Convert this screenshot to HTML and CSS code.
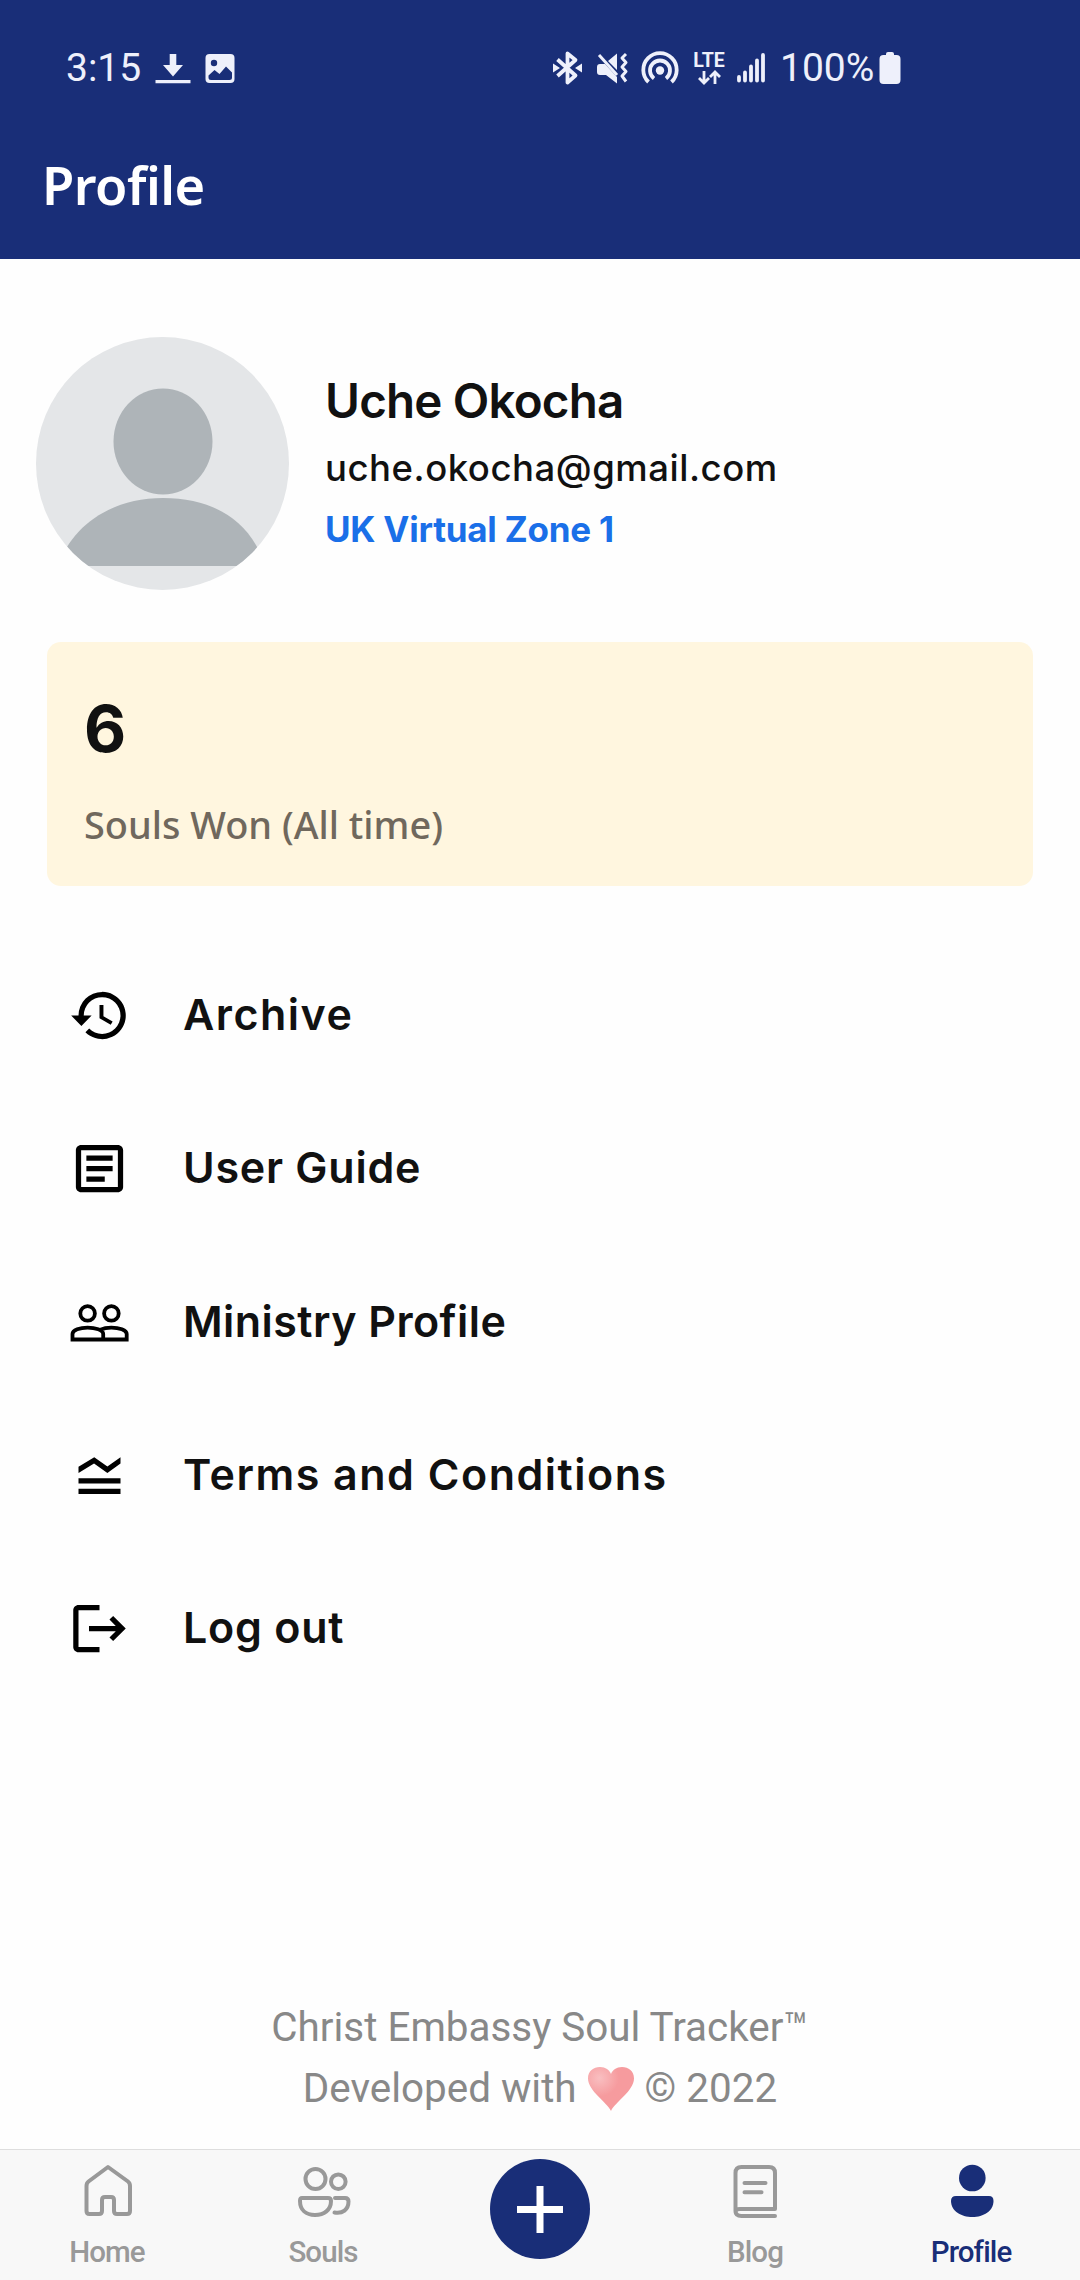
FILE: index.html
```html
<!DOCTYPE html>
<html lang="en">
    <head>
        <meta charset="utf-8">
        <title>Profile</title>
        <meta name="viewport" content="width=device-width">

        <link rel="stylesheet" href="styles.css">
    </head>

    <body>
        <header>
            <div class="status-bar">
                <span class="clock">3:15</span>
                <svg class="download" width="36" height="36" viewBox="0 0 36 36">
                    <path d="M14.700 4h6.600v11h6.700l-10 11.500L8 15h6.700zM.5 30h35v3.300H.5z"/>
                </svg>
                <svg class="picture" width="30" height="36" viewBox="0 0 30 36">
                    <rect x=".5" y="4" width="29" height="29" rx="4"/>
                    <circle class="hole" cx="9" cy="13" r="3.200"/>
                    <path class="hole" d="M3.500 25.500l6-5.500 5 4 6.500-7.500 6 6v5q0 2.500-2.500 2.500H6q-2.500 0-2.500-2.500z"/>
                </svg>

                <svg class="bluetooth" width="30" height="36" viewBox="0 0 30 36">
                    <path class="line" d="M4.500 9.500l18 16-8 7V3.500l8 6.500-18 16"/>
                    <path d="M0 13.500l7 4.500-7 4.500zM29 13.500L22 18l7 4.500z"/>
                </svg>
                <svg class="mute" width="32" height="36" viewBox="0 0 32 36">
                    <path d="M0 14h8l12 13v6.500L9 25H3q-3 0-3-3v-5q0-3 3-3zM11 11L20 3.500V20z"/>
                    <path class="line thin" d="M2 5l18 20"/>
                    <path class="line thin" d="M29 4l-4 4 4 4.500-4 4.500 4 4.500-4 4.500 4 5.500"/>
                </svg>
                <svg class="hotspot" width="38" height="36" viewBox="0 0 38 36">
                    <circle cx="19" cy="20.500" r="4.200"/>
                    <path class="line" d="M13 28.500a10 10 0 1 1 12 0M7.500 32a16.700 16.700 0 1 1 23 0"/>
                </svg>
                <div class="lte">
                    <span>LTE</span>
                    <svg width="28" height="15" viewBox="0 0 28 15">
                        <path d="M9 1v12M4 8l5 5 5-5M20 14V2M15 7l5-5 5 5"/>
                    </svg>
                </div>
                <svg class="signal" width="28" height="36" viewBox="0 0 28 36">
                    <path class="bars" d="M2 27v3.500M8 22.500v8M14 16.500v14M20 10.500v20M26 5v25.500"/>
                </svg>
                <span class="percent">100%</span>
                <svg class="battery" width="22" height="36" viewBox="0 0 22 36">
                    <path d="M7 4q0-2 2-2h4q2 0 2 2v1h2.500q4 0 4 4v21q0 4-4 4h-13q-4 0-4-4V9q0-4 4-4H7z"/>
                </svg>
            </div>

            <h1>Profile</h1>
        </header>

        <main>
            <section class="user">
                <svg class="avatar" width="253" height="253" viewBox="0 0 253 253">
                    <clipPath id="round"><circle cx="126.500" cy="126.500" r="126.500"/></clipPath>
                    <g clip-path="url(#round)">
                        <path class="backdrop" d="M0 0h253v253H0z"/>
                        <ellipse cx="127" cy="104.500" rx="49.500" ry="53"/>
                        <path d="M22 229C36 188 76 161 127 161s88 23 102 68z"/>
                    </g>
                </svg>
                <div class="info">
                    <h2>Uche Okocha</h2>
                    <div class="email">uche.okocha@gmail.com</div>
                    <div class="zone">UK Virtual Zone 1</div>
                </div>
            </section>

            <section class="souls-won">
                <div class="count">6</div>
                <div class="label">Souls Won (All time)</div>
            </section>

            <ul class="menu">
                <li>
                    <svg width="63" height="63" viewBox="0 0 24 24">
                        <path d="M13 3a9 9 0 0 0-9 9H1.200l3.900 4L9 12H6a7 7 0 1 1 7 7c-1.930 0-3.680-.79-4.940-2.060l-1.420 1.420A9 9 0 1 0 13 3zm-1 5v5l4.280 2.540.72-1.210-3.500-2.080V8z"/>
                    </svg>
                    <span class="archive">Archive</span>
                </li>
                <li>
                    <svg width="63" height="63" viewBox="0 0 24 24">
                        <path d="M19 5v14H5V5h14m0-2H5c-1.100 0-2 .9-2 2v14c0 1.100.9 2 2 2h14c1.100 0 2-.9 2-2V5c0-1.100-.9-2-2-2zM14 17H7v-2h7v2zm3-4H7v-2h10v2zm0-4H7V7h10v2z"/>
                    </svg>
                    <span class="guide">User Guide</span>
                </li>
                <li>
                    <svg class="outline" width="63" height="63" viewBox="0 0 63 63">
                        <circle cx="19.600" cy="22.400" r="7.300"/>
                        <circle cx="43.400" cy="22.400" r="7.300"/>
                        <path d="M4.500 48.500V43c0-4 7.500-6.400 15.100-6.400S35.200 39 35.200 43v5.500zM35.200 48.500h23.500V43c0-4-7.700-6.400-15.300-6.400-4 0-8 .7-11 2.200"/>
                    </svg>
                    <span class="ministry">Ministry Profile</span>
                </li>
                <li>
                    <svg width="63" height="63" viewBox="0 0 24 24">
                        <path d="M20 15H4v-2h16v2zm0 2H4v2h16v-2zm-5-6l5-3.550V5l-5 3.550L10 5 4 8.660V11l5.920-3.610L15 11z"/>
                    </svg>
                    <span class="terms">Terms and Conditions</span>
                </li>
                <li>
                    <svg width="63" height="63" viewBox="0 0 24 24">
                        <path d="M12 3H4c-1.100 0-2 .9-2 2v14c0 1.100.9 2 2 2h8v-2H4V5h8zM22 12l-4.800-4.800-1.400 1.400L18.200 11H8v2h10.200l-2.400 2.400 1.400 1.400z"/>
                    </svg>
                    <span class="logout">Log out</span>
                </li>
            </ul>
        </main>

        <footer>
            <div class="product">Christ Embassy Soul Tracker™</div>
            <div class="credit">
                Developed with
                <svg width="46" height="45" viewBox="0 0 46 45">
                    <defs>
                        <radialGradient id="shine" cx=".25" cy=".25" r=".42">
                            <stop offset="0" stop-color="#f9bfc1"/>
                            <stop offset="1" stop-color="#f69b9e"/>
                        </radialGradient>
                    </defs>
                    <path fill="url(#shine)" d="M23 45C19 36 0 25 0 12.500 0 5 5.500 1 12 1c5.500 0 9.500 3 11 7 1.500-4 5.500-7 11-7 6.500 0 12 4 12 11.500C46 25 27 36 23 45z"/>
                </svg>
                © 2022
            </div>
        </footer>

        <nav>
            <a>
                <svg width="60" height="60" viewBox="0 0 60 60">
                    <path d="M30 6L50 20.500Q52 22 52 25v25q0 3-3 3H39q-3 0-3-3V39q0-3-3-3h-6q-3 0-3 3v11q0 3-3 3H11.500q-3 0-3-3V25q0-3 2-4.500z"/>
                </svg>
                <span>Home</span>
            </a>
            <a>
                <svg width="60" height="60" viewBox="0 0 60 60">
                    <circle cx="21.500" cy="18" r="10"/>
                    <circle cx="44.300" cy="20.700" r="7.300"/>
                    <path d="M8 37h26q3 0 3 3c0 9-7 14-16 14S6 49 6 40q0-3 2-3zM41 37H51q3.500 0 3.500 3.500c0 8-6 12.500-14 11"/>
                </svg>
                <span>Souls</span>
            </a>
            <a class="add">
                <svg width="100" height="100" viewBox="0 0 100 100">
                    <circle cx="50" cy="50" r="50"/>
                    <path d="M50 27v47M27 50.500h46"/>
                </svg>
            </a>
            <a>
                <svg width="60" height="60" viewBox="0.500 0 60 60">
                    <path d="M49.500 55H16Q10 55 10 50V12q0-6 6-6h27.500q6 0 6 6v36H14.500Q10 48 10 51M19 22h21M19 31.300h17"/>
                </svg>
                <span>Blog</span>
            </a>
            <a class="active">
                <svg width="60" height="60" viewBox="0 0 60 60">
                    <circle cx="30.300" cy="17" r="13.300"/>
                    <path d="M14 35h33q4.500 0 4.500 5c0 10-10 16-21.200 16S9 50 9 40q0-5 5-5z"/>
                </svg>
                <span>Profile</span>
            </a>
        </nav>
    </body>
</html>
```
FILE: styles.css
```css
body {
    display: flex;
    flex-direction: column;
    height: 2280px;
    margin: 0;
    background-color: #fefefe;
    color: #111;
    font-family: Inter, "Liberation Sans", sans-serif;
}

h1, h2 {
    margin: 0;
}

svg {
    display: block;
    flex: none;
}

header {
    height: 259px;
    background-color: #192e78;
    color: #fff;
}

/* Status bar */

.status-bar {
    display: flex;
    align-items: center;
    height: 136px;
    padding-left: 66px;
    color: #eef0fb;
    font-family: Roboto, sans-serif;
    font-size: 39px;
    white-space: nowrap;
}

.status-bar svg {
    fill: #eef0fb;
}

.status-bar .hole {
    fill: #192e78;
}

.status-bar .line {
    fill: none;
    stroke: #eef0fb;
    stroke-width: 3.8;
    stroke-linejoin: round;
}

.status-bar .thin {
    stroke-width: 3;
}

.status-bar .bars {
    stroke: #eef0fb;
    stroke-width: 3.8;
    stroke-linecap: round;
}

.clock {
    width: 89px;
}

.picture {
    margin-left: 14px;
}

.bluetooth {
    margin-left: 318px;
}

.mute {
    margin-left: 14px;
}

.hotspot {
    margin-left: 12px;
}

.lte {
    display: flex;
    flex-direction: column;
    align-items: center;
    width: 34px;
    margin-left: 13px;
}

.lte span {
    font-size: 19.500px;
    font-weight: 700;
    line-height: 19px;
}

.status-bar .lte svg {
    fill: none;
    stroke: #eef0fb;
    stroke-width: 2.8;
}

.signal {
    margin-left: 11px;
}

.percent {
    width: 96px;
    margin-left: 15px;
}

.battery {
    margin-left: 3px;
}

h1 {
    padding-left: 42px;
    font-family: "Noto Sans", sans-serif;
    font-size: 52.500px;
    font-weight: 560;
    letter-spacing: -0.5px;
    line-height: 97px;
}

/* User */

.user {
    display: flex;
    gap: 36px;
    padding: 78px 0 0 36px;
}

.avatar {
    fill: #aeb4b8;
}

.avatar .backdrop {
    fill: #e4e6e8;
}

.info {
    padding-top: 30px;
    white-space: nowrap;
}

.info h2 {
    font-size: 47.500px;
    font-weight: 600;
    letter-spacing: -0.8px;
    line-height: 67px;
}

.email {
    font-size: 36.500px;
    font-weight: 450;
    letter-spacing: 0.53px;
    line-height: 69px;
}

.zone {
    color: #1a6fe8;
    font-size: 35px;
    font-weight: 700;
    letter-spacing: -0.25px;
    line-height: 52px;
}

.souls-won {
    box-sizing: border-box;
    height: 244px;
    margin: 52px 47px 0;
    padding: 47px 37px 0;
    border-radius: 14px;
    background-color: #fff6df;
}

.count {
    font-size: 65px;
    font-weight: 650;
    line-height: 80px;
}

.label {
    margin-top: 30px;
    color: #70685d;
    font-family: "Noto Sans", sans-serif;
    font-size: 37.900px;
    font-weight: 500;
    line-height: 50px;
}

/* Menu */

.menu {
    margin: 53px 0 0;
    padding: 0 0 0 68px;
    list-style: none;
}

.menu > li {
    display: flex;
    align-items: center;
    gap: 52px;
    height: 153.300px;
    font-size: 43px;
    font-weight: 600;
}

.menu span {
    padding-bottom: 3px;
}

.menu .outline {
    fill: none;
    stroke: #000;
    stroke-width: 3.8;
}

.archive, .terms {
    letter-spacing: 1.5px;
}

.guide, .logout {
    letter-spacing: 0.75px;
}

.ministry {
    letter-spacing: 0.45px;
}

footer {
    margin-top: auto;
    padding-bottom: 30px;
    color: #888;
    font-family: Roboto, sans-serif;
    font-size: 40.400px;
    line-height: 60.500px;
    text-align: center;
}

.credit {
    display: flex;
    align-items: center;
    justify-content: center;
    gap: 11px;
}

/* Bottom navigation */

nav {
    display: flex;
    box-sizing: border-box;
    height: 131px;
    border-top: 1px solid #dedede;
    background-color: #f8f8f8;
}

nav > a {
    display: flex;
    flex: 1;
    flex-direction: column;
    align-items: center;
    padding-top: 11px;
    color: #999;
    font-family: Roboto, sans-serif;
    font-size: 29.500px;
    font-weight: 500;
    letter-spacing: -0.9px;
    line-height: 40px;
}

nav svg {
    fill: none;
    stroke: #999;
    stroke-width: 4;
    stroke-linecap: round;
    stroke-linejoin: round;
}

nav span {
    margin-top: 11px;
    padding-right: 2px;
}

nav > .add {
    padding-top: 9px;
}

.add circle {
    fill: #192e78;
    stroke: none;
}

.add path {
    stroke: #fff;
    stroke-width: 7;
    stroke-linecap: butt;
}

nav > .active {
    color: #192e78;
}

.active svg {
    fill: #192e78;
    stroke: none;
}
```
